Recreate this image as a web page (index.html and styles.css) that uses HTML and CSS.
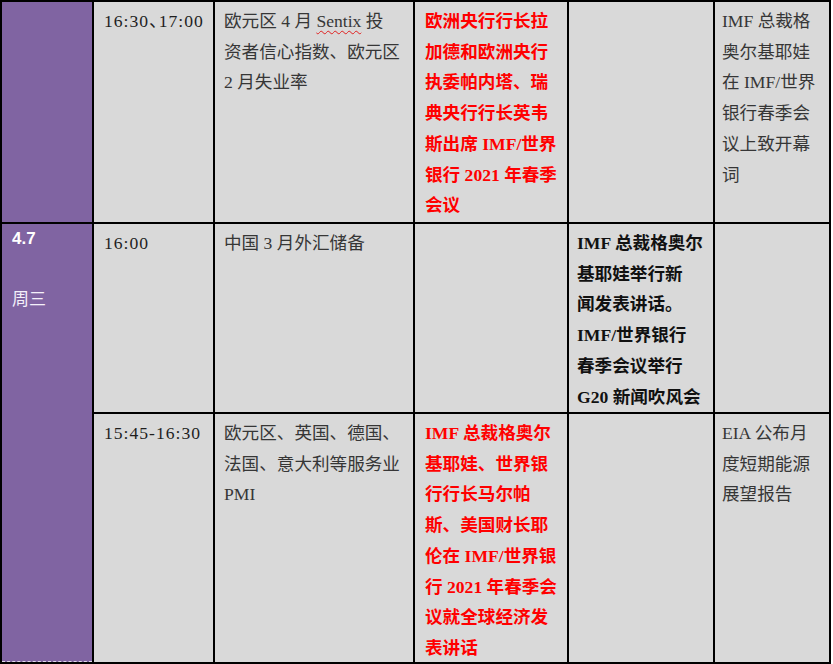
FILE: index.html
```html
<!DOCTYPE html>
<html lang="zh-CN">
<head>
<meta charset="utf-8">
<title>财经日历</title>
<link rel="stylesheet" href="styles.css">
</head>
<body>
<div class="sheet">
  <div class="cell day"></div>
  <div class="cell time">16:30<span class="punct">、</span>17:00</div>
  <div class="cell data">欧元区 4 月 <span class="typo">Sentix</span> 投<br>资者信心指数、欧元区<br>2 月失业率</div>
  <div class="cell event hot">欧洲央行行长拉<br>加德和欧洲央行<br>执委帕内塔、瑞<br>典央行行长英韦<br>斯出席 IMF/世界<br>银行 2021 年春季<br>会议</div>
  <div class="cell event plain"></div>
  <div class="cell other">IMF 总裁格<br>奥尔基耶娃<br>在 IMF/世界<br>银行春季会<br>议上致开幕<br>词</div>

  <div class="cell day day-span">
    <div class="date">4.7</div>
    <div class="weekday">周三</div>
  </div>
  <div class="cell time">16:00</div>
  <div class="cell data">中国 3 月外汇储备</div>
  <div class="cell event hot"></div>
  <div class="cell event strong">IMF 总裁格奥尔<br>基耶娃举行新<br>闻发表讲话。<br>IMF/世界银行<br>春季会议举行<br>G20 新闻吹风会</div>
  <div class="cell other"></div>

  <div class="cell time">15:45-16:30</div>
  <div class="cell data">欧元区、英国、德国、<br>法国、意大利等服务业<br>PMI</div>
  <div class="cell event hot">IMF 总裁格奥尔<br>基耶娃、世界银<br>行行长马尔帕<br>斯、美国财长耶<br>伦在 IMF/世界银<br>行 2021 年春季会<br>议就全球经济发<br>表讲话</div>
  <div class="cell event plain"></div>
  <div class="cell other">EIA 公布月<br>度短期能源<br>展望报告</div>
</div>
</body>
</html>
```

FILE: styles.css
```css
html, body {
  margin: 0;
  padding: 0;
  background: #ffffff;
}

.sheet {
  display: grid;
  grid-template-columns: 90px 119px 198px 152px 144px 114px;
  grid-template-rows: 220px 188px 248px;
  gap: 2px;
  padding: 2px;
  width: max-content;
  background: #000000;
  font-family: "Liberation Serif", "Noto Sans CJK SC", serif;
  font-size: 17.6px;
  line-height: 30.7px;
  color: #363636;
}

.cell {
  box-sizing: border-box;
  background: #d9d9d9;
  padding: 4px 0 0 10px;
  white-space: nowrap;
  overflow: hidden;
}

.day {
  background: #8064a2;
  padding: 0 0 0 10px;
  color: #ffffff;
}

.day-span {
  grid-row: span 2;
  border-bottom: 1px dashed rgba(255, 255, 255, 0.75);
}

.date {
  font-family: "Liberation Sans", "Noto Sans CJK SC", sans-serif;
  font-weight: 700;
  font-size: 17px;
}

.weekday {
  margin-top: 30.7px;
  font-family: "Liberation Sans", "Noto Sans CJK SC", sans-serif;
  font-size: 17px;
  color: #f4f0fa;
}

.time {
  padding-left: 10px;
  color: #1e1e1e;
  letter-spacing: 1px;
}

.punct {
  letter-spacing: -8px;
}

.data {
  padding-left: 9px;
}

.event {
  padding-left: 10px;
}

.hot {
  color: #ff0000;
  font-weight: 700;
}

.strong {
  padding-left: 8px;
  color: #111111;
  font-weight: 700;
}

.other {
  padding-left: 7px;
}

.typo {
  text-decoration: underline wavy #e02020;
  text-decoration-thickness: 1px;
  text-underline-offset: 3px;
}
```
